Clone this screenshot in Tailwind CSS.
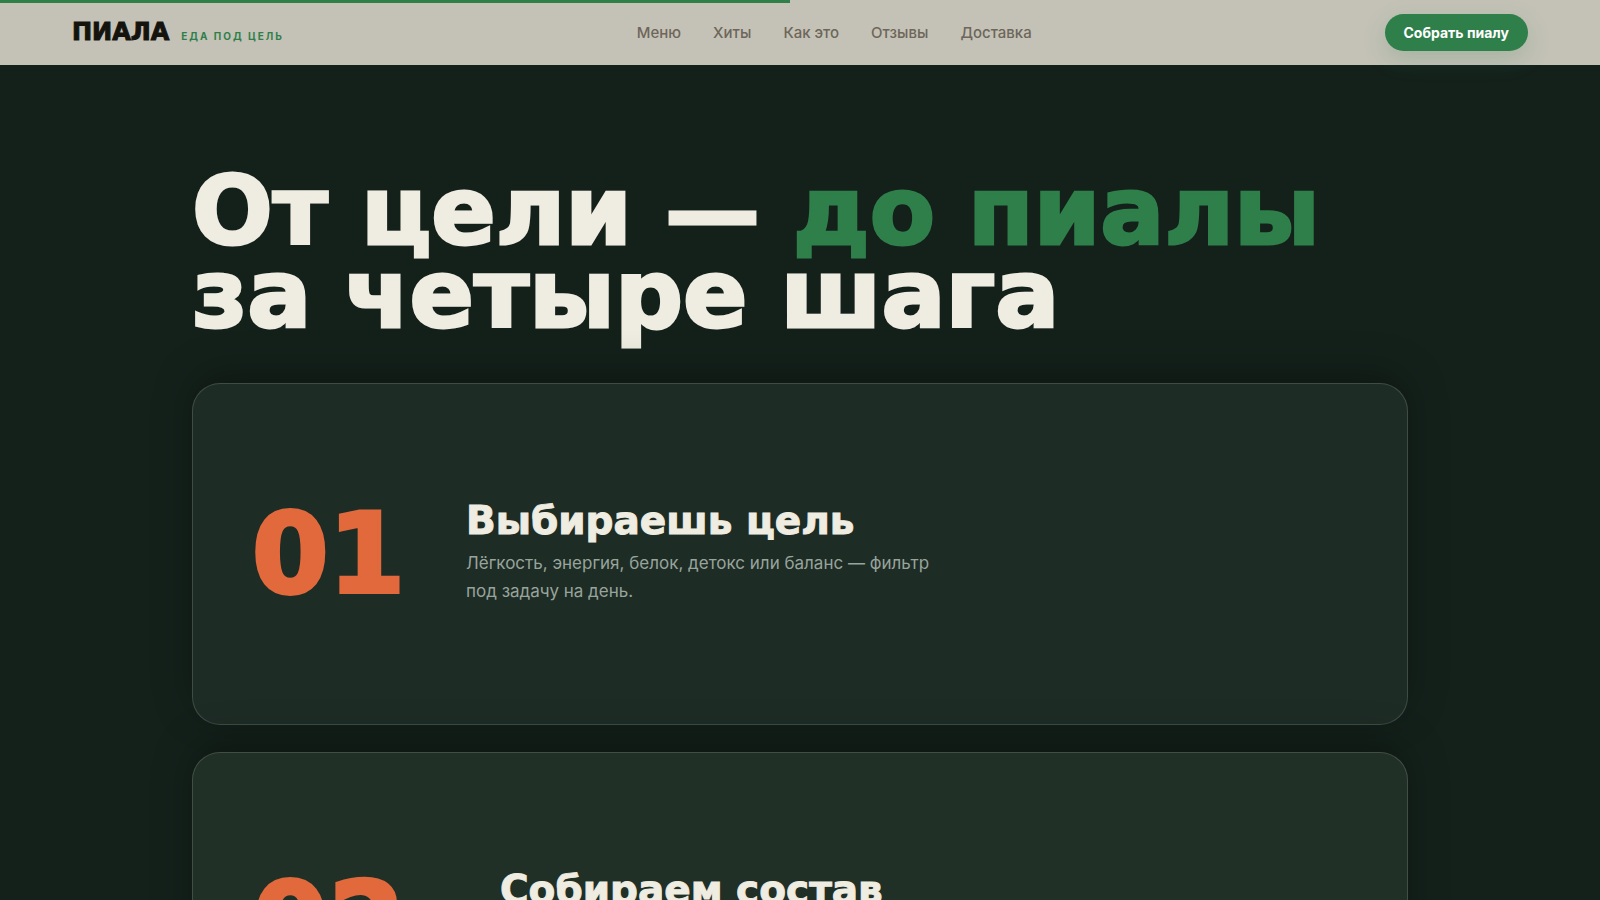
<!DOCTYPE html>
<html lang="ru">
<head>
    <meta charset="UTF-8">
    <meta name="viewport" content="width=device-width, initial-scale=1.0">
    <title>ПИАЛА — еда под цель</title>
    <script src="https://cdn.jsdelivr.net/npm/@tailwindcss/browser@4"></script>
</head>
<body class="bg-[#14211b] text-[#efece1] font-['Inter','Open_Sans',sans-serif]">
    <!-- Scroll progress -->
    <div class="fixed top-0 left-0 z-20 h-[3px] w-full">
        <div class="h-full bg-[#2f7f4a]" style="width: 49.4%"></div>
    </div>

    <header class="sticky top-0 z-10 flex h-[65px] items-center justify-between bg-[#c4c2b7] px-[72px]">
        <a href="#" class="flex items-baseline gap-3 pb-0.5">
            <span class="font-['DejaVu_Sans',sans-serif] text-2xl leading-7 font-bold text-[#15130d] [-webkit-text-stroke:1px]">ПИАЛА</span>
            <span class="text-[10px] font-bold tracking-[2px] text-[#2f7f4a] uppercase">Еда под цель</span>
        </a>
        <nav class="flex gap-8 pt-px text-[15px] font-medium text-[#6d665a]">
            <a href="#menu">Меню</a>
            <a href="#hits">Хиты</a>
            <a href="#how">Как это</a>
            <a href="#reviews">Отзывы</a>
            <a href="#delivery">Доставка</a>
        </nav>
        <button type="button" class="h-[37px] rounded-full bg-[#2f7f4a] px-[19px] text-sm font-bold text-white shadow-[0_8px_24px_rgba(47,127,74,0.2)]">Собрать пиалу</button>
    </header>

    <main id="how" class="mx-auto max-w-[1280px] px-8 pt-[105px] pb-28">
        <h1 class="font-['DejaVu_Sans',sans-serif] text-[95px] leading-[83px] font-bold [-webkit-text-stroke:3px]">
            От цели — <span class="text-[#2f7f4a]">до пиалы</span><br>
            за четыре шага
        </h1>

        <!-- Steps -->
        <div class="mt-[47px] flex flex-col gap-[27px]">
            <article class="flex min-h-[342px] items-center gap-16 rounded-[28px] border border-white/15 bg-[#1e2c26] px-[59px] shadow-[0_-10px_40px_rgba(0,0,0,0.3)]">
                <div class="w-[150px] shrink-0 font-['DejaVu_Sans',sans-serif] text-[110px] leading-none font-bold text-[#e2693b] [-webkit-text-stroke:4px]">01</div>
                <div class="max-w-[480px] pb-0.5">
                    <h2 class="font-['DejaVu_Sans',sans-serif] text-[39px] leading-10 font-bold [-webkit-text-stroke:1px]">Выбираешь цель</h2>
                    <p class="mt-2 text-[17px] leading-7 text-[#98a49b]">Лёгкость, энергия, белок, детокс или баланс — фильтр под задачу на день.</p>
                </div>
            </article>
            <article class="flex min-h-[342px] items-center gap-16 rounded-[28px] border border-white/15 bg-[#203027] px-[59px] shadow-[0_-10px_40px_rgba(0,0,0,0.3)]">
                <div class="w-[184px] shrink-0 font-['DejaVu_Sans',sans-serif] text-[110px] leading-none font-bold text-[#e2693b] [-webkit-text-stroke:4px]">02</div>
                <div class="h-[106px] max-w-[480px]">
                    <h2 class="font-['DejaVu_Sans',sans-serif] text-[39px] leading-10 font-bold [-webkit-text-stroke:1px]">Собираем состав</h2>
                </div>
            </article>
        </div>
    </main>
</body>
</html>
